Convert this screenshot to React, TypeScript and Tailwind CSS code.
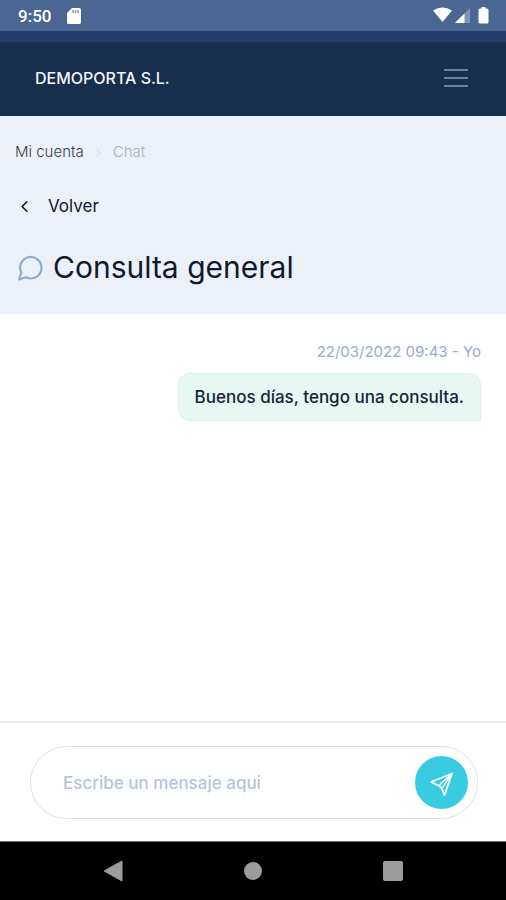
import { ChevronLeft, ChevronRight } from "lucide-react";

function StatusBar() {
  return (
    <div className="flex h-[31px] shrink-0 items-center justify-between bg-[#4a6793] pr-4 pl-[18px] text-white">
      <div className="flex items-center gap-4">
        <span className="font-['Roboto',sans-serif] text-[17px] leading-5 font-medium">9:50</span>
        <svg width="14" height="16" viewBox="0 0 14 16" fill="none" aria-hidden="true">
          <path d="M5 0h7.500A1.500 1.500 0 0 1 14 1.500v13a1.500 1.500 0 0 1-1.500 1.500h-11A1.500 1.500 0 0 1 0 14.500V5z" fill="#fff" />
          <path d="M6 2v3M8.500 2v3M11 2v3" stroke="#8197b8" strokeWidth="1.500" />
        </svg>
      </div>
      <svg width="57" height="18" viewBox="0 0 57 18" aria-hidden="true">
        <path d="M0 3.500Q9.500-2.500 19 3.500L9.500 15z" fill="#fff" />
        <path d="M37 1v15H22z" fill="#7f96b9" />
        <path d="M31.500 6.500V16H22z" fill="#fff" />
        <path d="M48.500 0h4v1.500H54a1.500 1.500 0 0 1 1.500 1.500v12A1.500 1.500 0 0 1 54 16.500h-7a1.500 1.500 0 0 1-1.500-1.500V3A1.500 1.500 0 0 1 47 1.500h1.500z" fill="#fff" />
      </svg>
    </div>
  );
}

function Header() {
  return (
    <header className="flex h-[85px] shrink-0 items-center justify-between border-t-[11px] border-[#213e6a] bg-[#172e4c] pr-[38px] pb-[2px] pl-[35px]">
      <span className="text-base leading-6 font-medium text-[#f3f5fa]">DEMOPORTA S.L.</span>
      <button type="button" aria-label="Menú" className="flex w-6 flex-col gap-[6px]">
        <span className="h-[2px] w-full bg-[#6683a8]" />
        <span className="h-[2px] w-full bg-[#6683a8]" />
        <span className="h-[2px] w-full bg-[#6683a8]" />
      </button>
    </header>
  );
}

function PageTitle() {
  return (
    <section className="flex h-[198px] shrink-0 flex-col bg-[#ecf0f8] px-[15px] pt-6">
      <nav aria-label="Ruta" className="flex items-center gap-2 text-[15px] leading-6 font-light">
        <a href="#cuenta" className="text-[#3d4048]">Mi cuenta</a>
        <ChevronRight size={13} strokeWidth={1.5} className="text-[#c3cddf]" aria-hidden="true" />
        <span className="text-[#a3b1cd]">Chat</span>
      </nav>
      <a href="#volver" className="mt-[30px] flex items-center gap-[14px] self-start text-[17px] leading-6 text-[#12182b]">
        <ChevronLeft size={19} strokeWidth={2} aria-hidden="true" />
        Volver
      </a>
      <h1 className="mt-[29px] flex items-center gap-2 text-3xl leading-10 text-[#12182b]">
        <svg width="30" height="36" viewBox="0 0 30 36" fill="none" stroke="#91acd1" strokeWidth="2.200" strokeLinecap="round" strokeLinejoin="round" aria-hidden="true">
          <path d="M26.500 18.700a10.700 10.700 0 0 1-15.600 9.500L4 30.500l2.300-6.900A10.700 10.700 0 1 1 26.500 18.700z" />
        </svg>
        Consulta general
      </h1>
    </section>
  );
}

function Composer() {
  return (
    <form
      onSubmit={(event) => event.preventDefault()}
      className="shrink-0 border-t-2 border-[#eeeeef] bg-white pt-[23px] pr-7 pb-[22px] pl-[30px]"
    >
      <div className="flex h-[73px] items-center rounded-full border border-[#e1e1e3] pr-[9px] pl-8">
        <input
          type="text"
          aria-label="Mensaje"
          placeholder="Escribe un mensaje aqui"
          className="min-w-0 flex-1 bg-transparent text-[17px] leading-6 font-medium text-[#12182b] outline-none placeholder:text-[#b6c4de]"
        />
        <button type="submit" aria-label="Enviar" className="flex size-[53px] shrink-0 items-center justify-center rounded-full bg-[#37cce0]">
          <svg width="26" height="26" viewBox="0 0 26 26" fill="none" stroke="#fff" strokeWidth="1.800" strokeLinejoin="round" strokeLinecap="round" aria-hidden="true">
            <path d="M23 3.500L2 12l7.500 3.500Q12 17 13 19l2.500 6z" />
            <path d="M23 3.500L10.500 15M23 3.500L13 18.500" strokeWidth="1.400" />
          </svg>
        </button>
      </div>
    </form>
  );
}

function SystemNav() {
  return (
    <nav aria-label="Sistema" className="flex h-[59px] shrink-0 items-center justify-center gap-[121px] border-t border-[#777777] bg-black">
      <button type="button" aria-label="Atrás">
        <svg width="20" height="22" viewBox="0 0 20 22" aria-hidden="true">
          <path d="M19 1v20L1 11z" fill="#9c9c9c" stroke="#9c9c9c" strokeLinejoin="round" />
        </svg>
      </button>
      <button type="button" aria-label="Inicio" className="size-[18px] rounded-full bg-[#9c9c9c]" />
      <button type="button" aria-label="Recientes" className="size-5 rounded-[2px] bg-[#9c9c9c]" />
    </nav>
  );
}

export default function App() {
  return (
    <div className="flex min-h-screen flex-col bg-white font-['Inter',sans-serif]">
      <StatusBar />
      <Header />
      <PageTitle />
      <main className="flex flex-1 flex-col items-end px-[25px] pt-[26px]">
        <p className="text-[15px] leading-6 text-[#9aa8d3]">22/03/2022 09:43 - Yo</p>
        <p className="mt-[9px] rounded-xl rounded-br-none border border-[#d9f1e9] bg-[#e7f7f2] px-4 py-[11px] text-[17px] leading-6 font-medium text-[#12253a]">
          Buenos días, tengo una consulta.
        </p>
      </main>
      <Composer />
      <SystemNav />
    </div>
  );
}
